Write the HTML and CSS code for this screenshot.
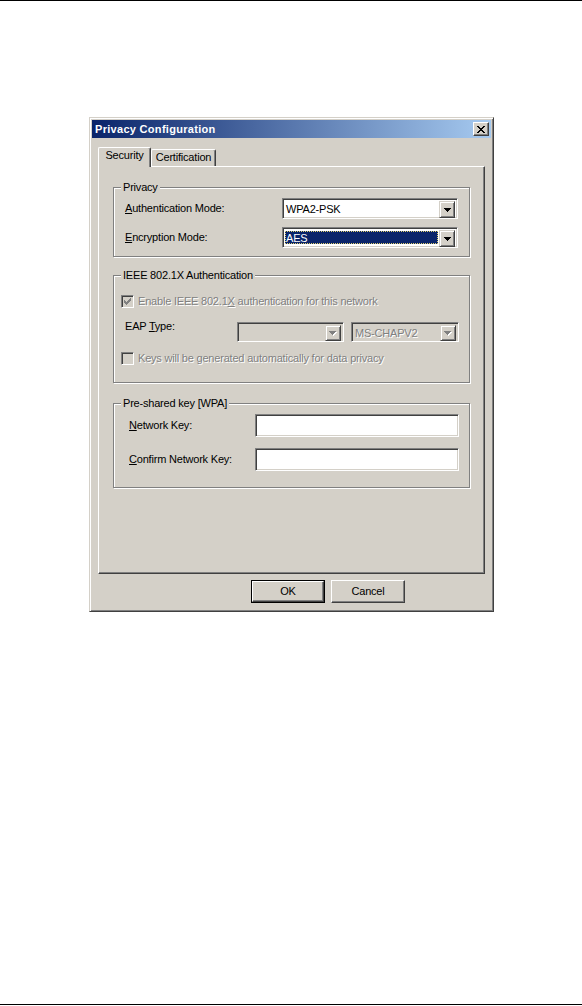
FILE: index.html
```html
<!DOCTYPE html>
<html>
<head>
<meta charset="utf-8">
<title>Privacy Configuration</title>
<link rel="stylesheet" href="styles.css">
</head>
<body>
<div class="page">
  <div class="dialog">
    <div class="titlebar">
      <span class="title">Privacy Configuration</span>
      <span class="close">
        <svg width="8" height="7" viewBox="0 0 8 7" shape-rendering="crispEdges"><path d="M0 0h2v1H0zM6 0h2v1H6zM1 1h2v1H1zM5 1h2v1H5zM2 2h4v1H2zM3 3h2v1H3zM2 4h4v1H2zM1 5h2v1H1zM5 5h2v1H5zM0 6h2v1H0zM6 6h2v1H6z" fill="#000"/></svg>
      </span>
    </div>

    <div class="tabs">
      <div class="tab tab-active">Security</div>
      <div class="tab tab-cert">Certification</div>
    </div>

    <div class="panel">
      <div class="group group-privacy">
        <div class="group-title">Privacy</div>
        <div class="group-body body-privacy">
          <div class="row row-first">
            <span class="label"><u>A</u>uthentication Mode:</span>
            <div class="combo combo-wide">
              <span class="combo-text">WPA2-PSK</span>
              <span class="drop"><svg width="7" height="4" viewBox="0 0 7 4" shape-rendering="crispEdges"><path d="M0 0h7v1H0zM1 1h5v1H1zM2 2h3v1H2zM3 3h1v1H3z" fill="#000"/></svg></span>
            </div>
          </div>
          <div class="row row-second">
            <span class="label"><u>E</u>ncryption Mode:</span>
            <div class="combo combo-wide">
              <span class="combo-text combo-selected"><span class="sel">AES</span></span>
              <span class="drop"><svg width="7" height="4" viewBox="0 0 7 4" shape-rendering="crispEdges"><path d="M0 0h7v1H0zM1 1h5v1H1zM2 2h3v1H2zM3 3h1v1H3z" fill="#000"/></svg></span>
            </div>
          </div>
        </div>
      </div>

      <div class="group group-ieee">
        <div class="group-title">IEEE 802.1X Authentication</div>
        <div class="group-body body-ieee">
          <div class="check-row check-first">
            <span class="checkbox"><svg width="7" height="7" viewBox="0 0 7 7" shape-rendering="crispEdges"><path d="M6 0h1v1H6zM5 1h2v1H5zM0 2h1v1H0zM4 2h3v1H4zM0 3h2v1H0zM3 3h3v1H3zM0 4h5v1H0zM1 5h3v1H1zM2 6h1v1H2z" fill="#808080"/></svg></span>
            <span class="disabled-text">Enable IEEE 802.1<u>X</u> authentication for this network</span>
          </div>
          <div class="eap-row">
            <span class="label eap-label">EAP <u>T</u>ype:</span>
            <div class="eap-combos">
              <div class="combo combo-disabled combo-eap1">
                <span class="combo-text"></span>
                <span class="drop"><svg width="8" height="5" viewBox="0 0 8 5" shape-rendering="crispEdges"><path d="M1 1h7v1H1zM2 2h5v1H2zM3 3h3v1H3zM4 4h1v1H4z" fill="#fff"/><path d="M0 0h7v1H0zM1 1h5v1H1zM2 2h3v1H2zM3 3h1v1H3z" fill="#808080"/></svg></span>
              </div>
              <div class="combo combo-disabled combo-eap2">
                <span class="combo-text disabled-text">MS-CHAPV2</span>
                <span class="drop"><svg width="8" height="5" viewBox="0 0 8 5" shape-rendering="crispEdges"><path d="M1 1h7v1H1zM2 2h5v1H2zM3 3h3v1H3zM4 4h1v1H4z" fill="#fff"/><path d="M0 0h7v1H0zM1 1h5v1H1zM2 2h3v1H2zM3 3h1v1H3z" fill="#808080"/></svg></span>
              </div>
            </div>
          </div>
          <div class="check-row check-second">
            <span class="checkbox"></span>
            <span class="disabled-text">Keys will be generated automatically for data privacy</span>
          </div>
        </div>
      </div>

      <div class="group group-psk">
        <div class="group-title">Pre-shared key [WPA]</div>
        <div class="group-body body-psk">
          <div class="row row-input-first">
            <span class="label"><u>N</u>etwork Key:</span>
            <div class="textbox"></div>
          </div>
          <div class="row row-input-second">
            <span class="label"><u>C</u>onfirm Network Key:</span>
            <div class="textbox"></div>
          </div>
        </div>
      </div>
    </div>

    <div class="buttons">
      <div class="button button-default"><span class="button-inner">OK</span></div>
      <div class="button"><span class="button-inner">Cancel</span></div>
    </div>
  </div>
</div>
</body>
</html>
```

FILE: styles.css
```css
* {
  box-sizing: border-box;
}

body {
  margin: 0;
  background: #fff;
  font-family: "Liberation Sans", Arial, sans-serif;
  font-size: 11px;
  line-height: 13px;
  letter-spacing: -0.2px;
  color: #000;
}

.page {
  height: 1005px;
  border-top: 1px solid #000;
  border-bottom: 1px solid #000;
  padding-top: 116px;
}

.dialog {
  width: 405px;
  height: 495px;
  margin-left: 89px;
  background: #d4d0c8;
  border: 1px solid;
  border-color: #d4d0c8 #404040 #404040 #d4d0c8;
  box-shadow: inset 1px 1px 0 #fff, inset -1px -1px 0 #808080;
  padding: 2px;
  display: flex;
  flex-direction: column;
}

/* title bar */
.titlebar {
  height: 18px;
  flex: none;
  display: flex;
  align-items: center;
  justify-content: space-between;
  padding: 0 2px 0 2px;
  background: linear-gradient(to right, #0a246a, #a6caf0);
}

.title {
  color: #fff;
  font-weight: bold;
  letter-spacing: 0.3px;
  padding-left: 1px;
}

.close {
  width: 16px;
  height: 14px;
  display: flex;
  align-items: center;
  justify-content: center;
  background: #d4d0c8;
  border: 1px solid;
  border-color: #fff #404040 #404040 #fff;
  box-shadow: inset -1px -1px 0 #808080;
  padding-right: 1px;
}

/* tabs */
.tabs {
  flex: none;
  height: 19px;
  margin: 9px 6px 0;
  display: flex;
  align-items: flex-end;
  position: relative;
  z-index: 1;
}

.tab {
  background: #d4d0c8;
  border-top: 1px solid #fff;
  border-left: 1px solid #fff;
  border-right: 1px solid #404040;
  box-shadow: inset -1px 0 0 #808080;
  border-radius: 2px 2px 0 0;
  text-align: center;
  padding-top: 1px;
}

.tab-active {
  width: 53px;
  height: 20px;
  margin-bottom: -1px;
}

.tab-cert {
  width: 65px;
  height: 17px;
}

/* panel */
.panel {
  flex: none;
  height: 408px;
  margin: 0 6px;
  border: 1px solid;
  border-color: #fff #404040 #404040 #fff;
  box-shadow: inset -1px -1px 0 #808080;
  padding: 20px 14px 0;
}

.group {
  border: 1px solid #808080;
  box-shadow: 1px 1px 0 #fff, inset 1px 1px 0 #fff;
}

.group-title {
  width: max-content;
  height: 13px;
  margin: -7px 0 0 7px;
  padding: 0 2px 0 2px;
  background: #d4d0c8;
}

.group-privacy {
  height: 70px;
}

.group-ieee {
  height: 108px;
  margin-top: 18px;
}

.group-psk {
  height: 85px;
  margin-top: 20px;
}

.body-privacy { padding: 0 11px; }
.body-ieee { padding: 0 10px 0 7px; }
.body-psk { padding: 0 10px 0 15px; }

.row {
  display: flex;
  align-items: center;
  justify-content: space-between;
}

.row-first { margin-top: 4px; }
.row-second { margin-top: 8px; }
.row-input-first { margin-top: 4px; }
.row-input-second { margin-top: 11px; }

.label {
  white-space: nowrap;
}

/* combo box */
.combo {
  height: 21px;
  display: flex;
  border: 1px solid;
  border-color: #808080 #fff #fff #808080;
  box-shadow: inset 1px 1px 0 #404040, inset -1px -1px 0 #d4d0c8;
  padding: 2px;
  background: #fff;
}

.combo-wide {
  width: 176px;
}

.combo-text {
  flex: 1;
  padding: 2px 0 0 1px;
  white-space: nowrap;
}

.combo-selected {
  padding: 1px 1px 1px 0;
}

.sel {
  display: block;
  height: 100%;
  background: #0a246a;
  color: #fff;
  outline: 1px dotted #e0d070;
  outline-offset: -1px;
  padding: 1px 0 0 1px;
}

.drop {
  width: 16px;
  height: 17px;
  flex: none;
  display: flex;
  align-items: center;
  justify-content: center;
  background: #d4d0c8;
  border: 1px solid;
  border-color: #d4d0c8 #404040 #404040 #d4d0c8;
  box-shadow: inset 1px 1px 0 #fff, inset -1px -1px 0 #808080;
  padding-top: 1px;
}

.combo-disabled {
  background: #d4d0c8;
  height: 20px;
}

.combo-disabled .drop {
  height: 16px;
}

.combo-eap1 { width: 107px; }
.combo-eap2 { width: 108px; }

/* IEEE rows */
.check-row {
  display: flex;
  align-items: center;
  height: 13px;
}

.check-first { margin-top: 13px; }
.check-second { margin-top: 10px; }

.checkbox {
  width: 13px;
  height: 13px;
  flex: none;
  display: flex;
  align-items: center;
  justify-content: center;
  margin-right: 4px;
  background: #d4d0c8;
  border: 1px solid;
  border-color: #808080 #fff #fff #808080;
  box-shadow: inset 1px 1px 0 #404040, inset -1px -1px 0 #d4d0c8;
}

.disabled-text {
  color: #808080;
  text-shadow: 1px 1px 0 #fff;
}

.eap-row {
  display: flex;
  align-items: flex-start;
  justify-content: space-between;
  margin-top: 12px;
  height: 22px;
}

.eap-label {
  margin-left: 4px;
}

.eap-combos {
  display: flex;
  gap: 7px;
  margin-top: 2px;
}

/* text box */
.textbox {
  width: 204px;
  height: 23px;
  background: #fff;
  border: 1px solid;
  border-color: #808080 #fff #fff #808080;
  box-shadow: inset 1px 1px 0 #404040, inset -1px -1px 0 #d4d0c8;
}

/* buttons */
.buttons {
  display: flex;
  gap: 6px;
  margin: 6px 0 0 159px;
}

.button {
  width: 74px;
  height: 23px;
  display: flex;
  border: 1px solid;
  border-color: #fff #404040 #404040 #fff;
  box-shadow: inset -1px -1px 0 #808080;
}

.button-inner {
  flex: 1;
  display: flex;
  align-items: center;
  justify-content: center;
}

.button-default {
  border-color: #000;
}

.button-default .button-inner {
  border: 1px solid;
  border-color: #fff #404040 #404040 #fff;
  box-shadow: inset -1px -1px 0 #808080;
}
```
